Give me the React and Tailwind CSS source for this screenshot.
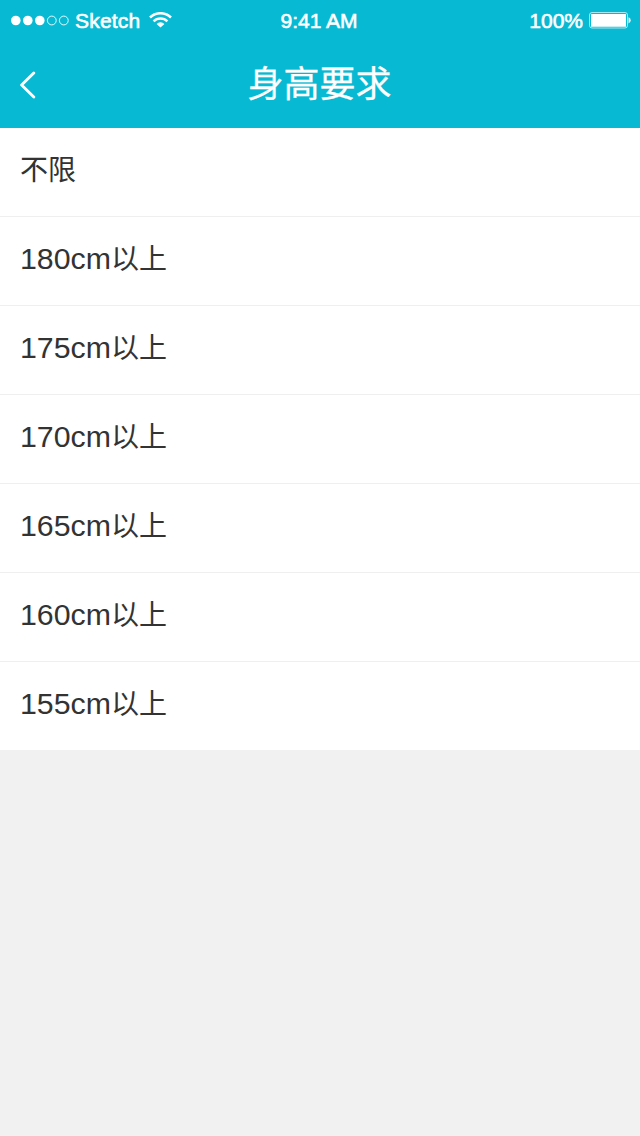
const rows = [
  { value: "", label: "不限" },
  { value: "180cm", label: "以上" },
  { value: "175cm", label: "以上" },
  { value: "170cm", label: "以上" },
  { value: "165cm", label: "以上" },
  { value: "160cm", label: "以上" },
  { value: "155cm", label: "以上" },
];

function StatusBar() {
  return (
    <div className="grid h-10 grid-cols-3 items-center pl-[11px] pr-[9px] font-['Liberation_Sans',sans-serif] text-[21px] leading-[38px] text-white [-webkit-text-stroke:0.6px_currentColor]">
      <div className="flex items-center">
        <svg className="overflow-visible" width="58" height="10" viewBox="0 0 58 10" fill="currentColor">
          <circle cx="4.8" cy="5.5" r="4.8" />
          <circle cx="16.8" cy="5.5" r="4.8" />
          <circle cx="28.8" cy="5.5" r="4.8" />
          <circle cx="40.8" cy="5.5" r="4.4" fill="none" stroke="currentColor" strokeWidth="0.9" />
          <circle cx="52.8" cy="5.5" r="4.4" fill="none" stroke="currentColor" strokeWidth="0.9" />
        </svg>
        <span className="ml-[6px] pt-[2px] tracking-[0.2px]">Sketch</span>
        <svg className="ml-[9px]" width="23" height="16" viewBox="0 0 23 16" fill="none" stroke="currentColor" strokeWidth="2.5">
          <path d="M1 5.5a15 15 0 0 1 21 0M4.6 9.3a9.8 9.8 0 0 1 13.8 0" />
          <path d="M11.5 15.5L7.6 12a5.3 5.3 0 0 1 7.8 0Z" fill="currentColor" stroke="none" />
        </svg>
      </div>
      <div className="pr-[4px] pt-[2px] text-center">9:41 AM</div>
      <div className="flex items-center justify-end">
        <span className="mr-[6px] pt-[2px]">100%</span>
        <svg width="42" height="18" viewBox="0 0 42 18" fill="currentColor">
          <rect x="0.5" y="1.5" width="38" height="15.5" rx="2.5" fill="none" stroke="currentColor" strokeOpacity="0.65" />
          <rect x="2" y="3" width="35" height="12.7" rx="0.5" />
          <path d="M39.5 6.2q2.2.5 2.2 3.1t-2.2 3.1z" fillOpacity="0.9" />
        </svg>
      </div>
    </div>
  );
}

export default function App() {
  return (
    <div className="min-h-[1136px] bg-[#f1f1f1] font-['Liberation_Sans','Noto_Sans_CJK_SC',sans-serif]">
      <header className="h-32 bg-[#08b9d3] text-white">
        <StatusBar />
        <div className="grid h-[88px] grid-cols-[80px_1fr_80px] items-center">
          <button aria-label="返回" className="pl-5 pt-px">
            <svg width="16" height="28" viewBox="0 0 16 28" fill="none" stroke="currentColor" strokeWidth="2.8" strokeLinecap="round" strokeLinejoin="round">
              <path d="M13.8 2L1.6 14l12.2 12" />
            </svg>
          </button>
          <h1 className="pr-px pt-[2px] text-center text-[36px] leading-[86px] [-webkit-text-stroke:0.3px_currentColor]">身高要求</h1>
        </div>
      </header>
      <ul className="divide-y divide-[#efefef] bg-white">
        {rows.map(({ value, label }) => (
          <li key={value} className="flex h-[89px] px-5 text-[28px] leading-[86px] text-[#333] last:h-[88px]">
            {value && <span className="text-[30.3px] leading-[84px]">{value}</span>}
            <span>{label}</span>
          </li>
        ))}
      </ul>
    </div>
  );
}
